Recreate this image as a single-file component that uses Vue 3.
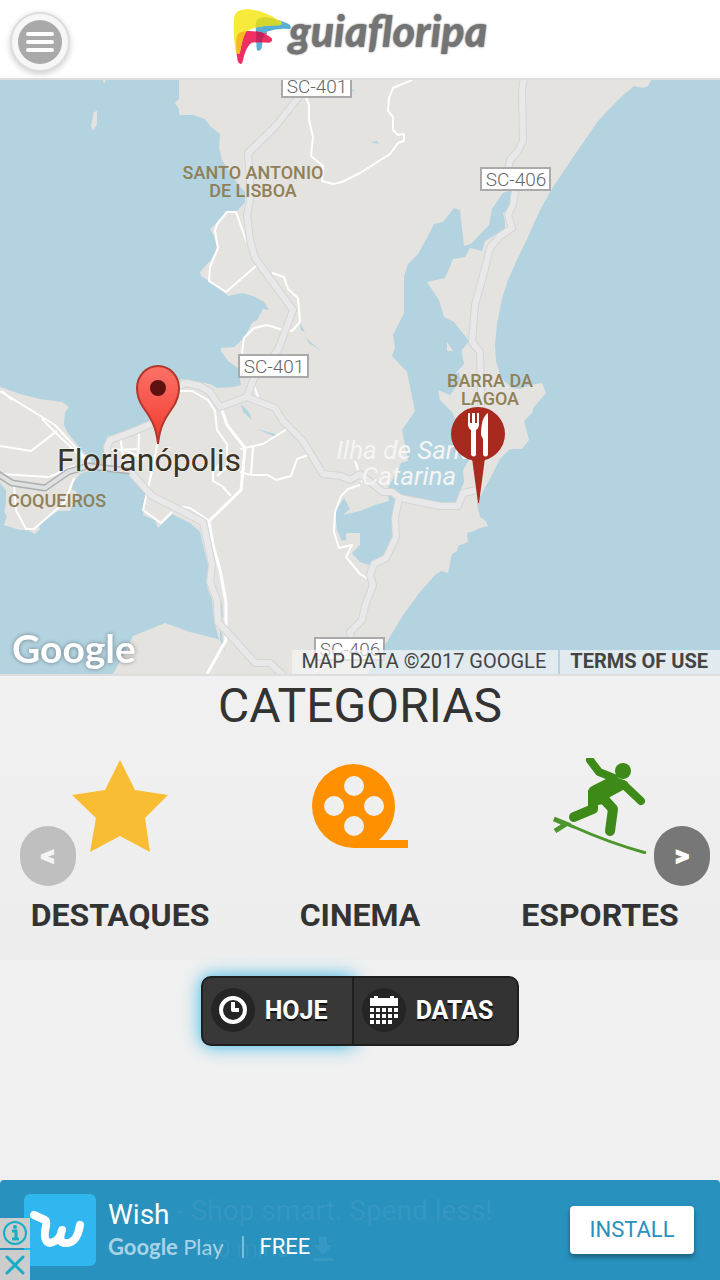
<script setup>
const highways = [
  'M300 92L298 98L275 127L248 153L250 180L250 200L247 215L250 240L255 258L293 310L278 350L254 378L247 397L220 407L210 392L200 386L186 383L170 390',
  'M151 424L132 432L110 440L107 447L108 466',
  'M247 397L275 408L283 421L303 441L323 474L341 476L350 480L360 474L383 492L392 492L400 498L440 506L458 506L463 493L477 490',
  'M399 498L395 518L396 537L386 558L374 564L370 575L373 585L365 606L362 620L350 632L352 644L335 660L310 674',
  'M524 78L522 90L523 141L518 151L510 160L508 170L515 190L513 205L508 215L512 228L500 236L490 248L483 276L475 305L472 342L480 352L481 390L481 410',
  'M128 469L152 496L180 510L203 522L208 545L212 565L210 582L217 600L218 622L240 646L255 663L270 663L286 678',
]
const streets = [
  'M306 98L309 105L309 120L313 137L311 156L323 166L322 181L333 184L342 182L360 173L390 154L398 143L404 141L404 134L398 135L393 130L393 117L388 111L389 98L393 88L412 80',
  'M247 243L236 212L227 212L217 224L215 231L218 248L210 267L209 281L226 292L256 266L256 258',
  'M272 273L284 277L288 289L298 298L300 322L292 331L283 330L267 325L254 328L244 338L242 352L245 362',
  'M253 383L258 397L250 399',
  'M0 391L55 425L89 462M42 419L61 438L84 459M57 431L31 451L0 446M12 400L2 391',
  'M180 391L192 391L208 400L215 411L217 430L227 444L227 467L217 476',
  'M120 436L125 468M139 434L138 460M107 450L140 449M125 450L145 460M158 440L154 462L143 510L161 523L172 512',
  'M240 449L263 444L287 429M253 447L251 475L268 475L276 480L291 476L297 459L308 455M240 472L251 475M221 463L213 472L213 481L222 486L231 496',
  'M0 474L49 477L75 466M14 484L16 510L26 529L34 529L65 502L74 478',
  'M172 510L182 507L190 508L208 520',
  'M360 485L348 489L341 496L335 512L334 532L339 548L352 545L346 557L360 574L370 580',
  'M355 461L362 482',
]
const mainStreets = [
  'M221 407L227 425L245 448L243 470L241 490L209 521L213 545L220 570L226 602L226 640L207 674',
]
</script>

<template>
  <div class="page">
    <header class="topbar">
      <button class="menu" type="button" aria-label="Menu">
        <svg width="44" height="44" viewBox="0 0 44 44" aria-hidden="true">
          <circle cx="22" cy="22" r="22" fill="#a9a9a9" />
          <path d="M10 14H34M10 22H34M10 30H34" stroke="#fff" stroke-width="4" stroke-linecap="round" />
        </svg>
      </button>
      <a class="logo" href="#" aria-label="guiafloripa">
        <svg width="60" height="60" viewBox="34 15 180 180" aria-hidden="true">
          <path fill="#58afd5" d="M102 70Q102 50 130 48Q160 52 200 68Q212 76 205 84Q170 80 135 92Q122 110 120 142Q112 156 105 145Q102 110 102 70Z" />
          <path fill="#ef2f63" d="M44 110Q50 90 75 90Q125 88 150 112Q155 122 143 125Q110 122 90 125Q72 135 62 185Q55 195 48 180Q42 150 44 110Z" />
          <path fill="#f7ea3a" d="M37 55Q37 25 75 25Q125 26 178 62Q184 73 170 73Q100 73 73 92Q62 110 54 158Q42 162 40 140Q34 90 37 55Z" />
          <path fill="#d3d62f" d="M102 70Q102 50 130 48Q155 50 178 62Q184 73 170 73Q130 73 102 80Z" />
          <path fill="#f5b921" d="M44 110Q50 90 74 91Q62 110 54 158Q46 160 44 148Z" />
          <path fill="#c4245a" d="M103 91Q120 92 135 101V92Q122 110 121 124L104 124Z" />
        </svg>
        <span>guiafloripa</span>
      </a>
    </header>

    <section class="map" aria-label="Mapa">
      <svg class="canvas" viewBox="0 80 720 594" role="img" aria-label="Mapa de Florianópolis">
        <defs>
          <linearGradient id="pin" x1="0" y1="0" x2="0" y2="1">
            <stop offset="0" stop-color="#fb7268" />
            <stop offset="1" stop-color="#f2382c" />
          </linearGradient>
        </defs>
        <rect y="80" width="720" height="594" fill="#e4e3df" />
        <g fill="#b3d3e0">
          <path d="M0 80H179V99L175 103L179 109V115H193L205 119L210 126L220 134L219 148L222 160L230 173L238 184L245 192V202L237 211H227L217 223L210 229L214 236L217 248L211 260L200 272L201 276L211 282L226 294L228 296L242 293L253 296L264 302L269 310L263 309L257 320L252 323L244 338L234 347L221 348V351L228 361L238 368L241 385L233 387L217 388L210 384L190 380L182 379L158 390L150 408L151 421L135 427L107 437L104 455L110 457L111 469L94 469L90 457L84 453L67 432L64 425L65 412L69 407L62 402L40 399L20 394L0 387Z" />
          <path d="M0 483L6 490V505L4 512L7 516L4 525L20 530L28 530L35 534L40 529L38 524L58 511H70L72 506L78 498L76 491L72 490L73 483L80 474L90 470H128L140 484L146 492L143 515L155 520L158 528L168 518L172 514L190 523L200 532L203 545L208 565L207 587L212 600L214 620L219 640L214 638L190 632L165 623L133 636L125 652L113 674H0Z" />
          <path d="M651 80L648 86L643 88L634 86L620 98L598 121L580 147L553 187L540 210L527 239L516 262L508 280L502 299L497 324L495 345L496 361L501 378L512 388L520 389L530 385L542 383L546 393L534 407L532 413L524 421L529 440L522 449H510L500 459L494 471L482 493L477 503L480 517L486 521L488 526L480 528L474 531L467 533L468 542L458 546L457 551L452 554L448 573L441 571L436 574L420 592L403 615L385 645L372 665L368 674H720V80Z" />
          <path d="M454 208L443 222L434 224L427 238L418 254L408 264L404 277V313L393 335L395 347L392 356L407 372L415 411L402 430L405 445L408 461L401 463L397 472L388 487L392 491L402 497L440 504H458L461 499L459 493L464 482L463 470L469 460L466 445L460 428L452 412L440 400L438 390L450 395L461 380L459 372L464 368V360L462 350L469 341L454 322L444 317L439 300L427 282L445 278L453 259L465 257L470 248L482 251L485 241L498 233L505 229V222L503 213L511 207V190L503 193L492 209L489 225L484 230L471 244L464 246L460 210Z" />
          <path d="M344 498L350 509L343 515L360 511L375 505L389 501L387 492L396 498L395 518L396 537L386 558L372 566L360 562L352 553L360 545V533H346V540L342 541L337 530L335 512Z" />
          <path d="M215 590L222 604L223 620L217 605ZM300 322L305 332L301 330ZM305 337L321 351L309 343ZM241 404L249 412L252 420L243 412ZM257 429L279 435L276 437ZM370 142L377 141L379 144ZM352 89L356 91L352 91ZM220 625L225 652L220 640Z" />
        </g>
        <path fill="#e4e3df" d="M103 80L104 84L106 80ZM94 112L97 111V124L93 131L91 126ZM447 342L453 351H447ZM461 349L468 369L455 374L464 364Z" />
        <g fill="none" stroke="#fff" stroke-width="2" stroke-linejoin="round">
          <path v-for="d in streets" :key="d" :d="d" />
        </g>
        <g fill="none" stroke-linejoin="round">
          <path v-for="d in mainStreets" :key="d" :d="d" stroke="#fff" stroke-width="3" />
          <path v-for="d in highways" :key="'c' + d" :d="d" stroke="#d4d5d6" stroke-width="8" />
          <path v-for="d in highways" :key="d" :d="d" stroke="#e8e8e8" stroke-width="6" />
          <path d="M-2 474L12 483L45 488L68 472L88 466L130 471" stroke="#aaaeb1" stroke-width="7" />
          <path d="M-2 474L12 483L45 488L68 472L88 466L130 471" stroke="#dfe0e0" stroke-width="4" />
        </g>
        <g class="shield">
          <rect x="282" y="74" width="69" height="23" /><text x="317" y="93">SC-401</text>
          <rect x="481" y="168" width="69" height="22" /><text x="516" y="186">SC-406</text>
          <rect x="239" y="355" width="69" height="22" /><text x="274" y="373">SC-401</text>
          <rect x="315" y="638" width="69" height="22" /><text x="350" y="656">SC-406</text>
        </g>
        <g class="area">
          <text x="253" y="179">SANTO ANTONIO</text><text x="253" y="197">DE LISBOA</text>
          <text x="490" y="387">BARRA DA</text><text x="490" y="405">LAGOA</text>
          <text x="57" y="507">COQUEIROS</text>
        </g>
        <g class="island"><text x="409" y="459">Ilha de Santa</text><text x="409" y="485">Catarina</text></g>
        <text class="city" x="149" y="471">Florianópolis</text>
        <path d="M158 444C156 425 150 417 143 407Q137 398 137 388A21 22 0 0 1 179 388Q179 398 173 407C166 417 160 425 158 444Z" fill="url(#pin)" stroke="#b3362d" stroke-width="2" />
        <circle cx="158" cy="388" r="8" fill="#5d1111" />
        <path d="M472 458H485L479 503H478Z" fill="#a82c20" />
        <circle cx="478" cy="434" r="27" fill="#a8291d" />
        <g fill="#fff">
          <path d="M468 413H470V423H472V413H475V423H477V413H479V424Q479 428 476 430V455Q474 458 471 455V430Q468 428 468 424Z" />
          <path d="M488 413V455Q486 458 483 455V439L481 435Q481 417 488 413Z" />
        </g>
        <text class="google" x="12" y="663">Google</text>
      </svg>
      <div class="credits">
        <span>MAP DATA ©2017 GOOGLE</span>
        <a href="#">TERMS OF USE</a>
      </div>
    </section>

    <section class="categories">
      <h1>CATEGORIAS</h1>
      <div class="grid">
        <a href="#" class="category">
          <svg width="96" height="96" viewBox="0 0 96 96" aria-hidden="true">
            <path fill="#f9bd33" d="M48 2L63 32L96 37L73 60L78 94L48 78L18 94L24 60L0 37L33 32Z" />
          </svg>
          DESTAQUES
        </a>
        <a href="#" class="category">
          <svg width="96" height="96" viewBox="0 0 96 96" aria-hidden="true">
            <path fill="#ff9100" fill-rule="evenodd" d="M42 6A42 42 0 0 1 83 48Q83 68 67 82H96V90H42A42 42 0 0 1 42 6ZM42 18A10 10 0 1 0 42 38A10 10 0 1 0 42 18ZM22 38A10 10 0 1 0 22 58A10 10 0 1 0 22 38ZM62 38A10 10 0 1 0 62 58A10 10 0 1 0 62 38ZM42 58A10 10 0 1 0 42 78A10 10 0 1 0 42 58Z" />
          </svg>
          CINEMA
        </a>
        <a href="#" class="category">
          <svg width="96" height="96" viewBox="0 0 96 96" aria-hidden="true">
            <circle cx="71" cy="13" r="8" fill="#3d8a18" />
            <path fill="#3d8a18" d="M46 16L61 18L69 21L76 24L71 32L58 39L52 46L46 47L36 45V33Q37 29 42 27L54 21Z" />
            <g fill="none" stroke="#3d8a18" stroke-linecap="round" stroke-linejoin="round">
              <path d="M38 2L47 14L62 20M71 26L89 43" stroke-width="8" />
              <path d="M41 35L41 51L22 59M50 39L61 51L58 73" stroke-width="10" />
            </g>
            <g fill="none" stroke="#4c962b">
              <path d="M2 61L22 69Q58 85 94 95" stroke-width="3" />
              <path d="M2 61L14 66L3 73" stroke-width="5" />
            </g>
          </svg>
          ESPORTES
        </a>
      </div>
      <button class="arrow prev" type="button" aria-label="Anterior">&lt;</button>
      <button class="arrow next" type="button" aria-label="Próximo">&gt;</button>
    </section>

    <div class="filters">
      <button class="filter active" type="button">
        <svg width="44" height="44" viewBox="0 0 44 44" aria-hidden="true">
          <circle cx="22" cy="22" r="22" fill="#252525" />
          <circle cx="22" cy="22" r="12" fill="none" stroke="#fff" stroke-width="4" />
          <path d="M22 14V22H28" fill="none" stroke="#fff" stroke-width="4" stroke-linejoin="round" />
        </svg>
        HOJE
      </button>
      <button class="filter" type="button">
        <svg width="44" height="44" viewBox="0 0 44 44" aria-hidden="true">
          <circle cx="22" cy="22" r="22" fill="#252525" />
          <path fill="#fff" d="M8 10H12V8H16V10H28V8H32V10H36V18H8ZM8 20h4v4h-4ZM14 20h4v4h-4ZM20 20h4v4h-4ZM26 20h4v4h-4ZM32 20h4v4h-4ZM8 26h4v4h-4ZM14 26h4v4h-4ZM20 26h4v4h-4ZM26 26h4v4h-4ZM32 26h4v4h-4ZM8 32h4v4h-4ZM14 32h4v4h-4ZM20 32h4v4h-4ZM26 32h4v4h-4Z" />
        </svg>
        DATAS
      </button>
    </div>

    <aside class="ad">
      <svg class="app-icon" width="72" height="72" viewBox="0 0 72 72" aria-hidden="true">
        <rect width="72" height="72" rx="6" fill="#31b7ef" />
        <path d="M10 21L21 26Q23 27 22 32C18 49 25 50 29 48Q36 46 38 36Q34 48 40 49C50 50 54 43 56 31" fill="none" stroke="#fff" stroke-width="8" stroke-linecap="round" stroke-linejoin="round" />
      </svg>
      <div class="ad-controls">
        <button type="button" aria-label="Info">
          <svg width="26" height="26" viewBox="0 0 26 26" aria-hidden="true">
            <g fill="none" stroke="#18adc7" stroke-width="2"><circle cx="13" cy="13" r="11" /><path d="M10 11H14V19M10 19H17" stroke-width="3" /></g>
            <circle cx="13" cy="7" r="2" fill="#18adc7" />
          </svg>
        </button>
        <button type="button" aria-label="Fechar">
          <svg width="26" height="26" viewBox="0 0 26 26" aria-hidden="true"><path d="M5 5L21 21M21 5L5 21" stroke="#18adc7" stroke-width="3" stroke-linecap="round" /></svg>
        </button>
      </div>
      <div class="ghost" aria-hidden="true">
        <p>- Shop smart. Spend less!</p>
        <p class="ghost-row">100 mins
          <svg width="20" height="24" viewBox="0 0 20 24"><path fill="currentColor" d="M6 0H14V8H20L10 18L0 8H6ZM0 21H20V24H0Z" /></svg>
        </p>
      </div>
      <div class="ad-text">
        <strong>Wish</strong>
        <div class="ad-meta"><span class="store">Google <span class="play">Play</span></span><span class="price">FREE</span></div>
      </div>
      <button class="install" type="button">INSTALL</button>
    </aside>
  </div>
</template>

<style>
body {
  background: #f0f0f0;
}
</style>

<style scoped>
* {
  box-sizing: border-box;
}
.page {
  display: flex;
  flex-direction: column;
  min-height: 100vh;
  font-family: Roboto, "Liberation Sans", sans-serif;
  color: #333;
  background: #f0f0f0;
}
button {
  font-family: inherit;
  border: 0;
  padding: 0;
  cursor: pointer;
}
a {
  color: inherit;
  text-decoration: none;
}
svg {
  display: block;
  flex: none;
}
.topbar {
  display: grid;
  grid-template-columns: 1fr auto 1fr;
  height: 80px;
  padding: 6px 10px 0;
  background: #fff;
  border-bottom: 2px solid #ddd;
}
.menu {
  display: grid;
  place-items: center;
  width: 60px;
  height: 60px;
  margin-top: 6px;
  border: 2px solid #ddd;
  border-radius: 50%;
  background: #f6f6f6;
  box-shadow: 0 2px 6px rgba(0, 0, 0, 0.2);
}
.logo {
  display: flex;
  height: 60px;
  color: #747474;
  font: italic 900 43px/50px Lato, "Open Sans", sans-serif;
  text-shadow: 0 0 2px #747474;
}
.logo span {
  margin-left: -4px;
}
.map {
  position: relative;
  border-bottom: 2px solid #ddd;
}
.canvas {
  width: 100%;
  height: auto;
}
.canvas text {
  text-anchor: middle;
}
.shield rect {
  fill: #fff;
  stroke: #aaa;
  stroke-width: 2px;
}
.shield text {
  font-size: 19px;
  font-weight: 300;
  fill: #666;
}
.area text {
  font-size: 18px;
  font-weight: 500;
  fill: #8f8057;
}
.island text {
  font-size: 26px;
  font-style: italic;
  fill: #f5f5f4;
}
.canvas .city {
  font-size: 32px;
  fill: #3b3324;
  stroke: rgba(255, 255, 255, 0.4);
  stroke-width: 2px;
  paint-order: stroke;
}
.canvas .google {
  font: 700 39px Lato, sans-serif;
  fill: #fff;
  text-anchor: start;
  filter: drop-shadow(0 0 2px rgba(0, 0, 0, 0.4));
}
.credits {
  position: absolute;
  right: 0;
  bottom: 0;
  display: flex;
  gap: 2px;
  font-size: 20px;
  line-height: 22px;
  color: #444;
  white-space: nowrap;
}
.credits > * {
  padding: 0 12px 2px 10px;
  background: rgba(245, 245, 245, 0.7);
}
.credits a {
  font-weight: 700;
}
.categories {
  position: relative;
  padding-bottom: 25px;
  background: linear-gradient(#f1f1f1, #ededed);
}
h1 {
  margin: 0 0 22px;
  font-size: 48px;
  font-weight: 400;
  line-height: 60px;
  text-align: center;
}
.grid {
  display: grid;
  grid-template-columns: repeat(3, 1fr);
}
.category {
  display: flex;
  flex-direction: column;
  align-items: center;
  gap: 41px;
  font-size: 32px;
  font-weight: 700;
  line-height: 40px;
}
.arrow {
  position: absolute;
  top: 150px;
  width: 56px;
  height: 60px;
  border-radius: 28px;
  background: #777;
  color: #fff;
  font-size: 28px;
  font-weight: 900;
  line-height: 60px;
  -webkit-text-stroke: 1px currentColor;
}
.prev {
  left: 20px;
  background: #bfbfbf;
  color: #f4f4f4;
}
.next {
  right: 10px;
}
.filters {
  display: flex;
  justify-content: center;
  padding: 16px 0 40px;
}
.filter {
  position: relative;
  display: flex;
  align-items: center;
  gap: 10px;
  height: 70px;
  padding: 0 24px 2px 8px;
  border: 2px solid #1f1f1f;
  border-radius: 0 10px 10px 0;
  background: #333;
  color: #fff;
  font-size: 25px;
  font-weight: 700;
  text-shadow: 0 2px 0 #111;
}
.filter + .filter {
  border-left: 0;
}
.active {
  border-radius: 10px 0 0 10px;
  background: #383838;
  box-shadow: 0 0 18px #33b5e5;
}
.ad {
  position: relative;
  display: flex;
  align-items: flex-start;
  gap: 12px;
  height: 100px;
  margin-top: auto;
  padding: 14px 26px 0 24px;
  border-radius: 4px 4px 0 0;
  background: #2891bd;
  color: #fff;
}
.ad-controls {
  position: absolute;
  left: 0;
  bottom: 0;
  display: grid;
  gap: 2px;
}
.ad-controls button {
  display: grid;
  place-items: center;
  width: 30px;
  height: 30px;
  background: #ccc;
}
.ghost {
  position: absolute;
  left: 176px;
  top: 12px;
  color: rgba(255, 255, 255, 0.07);
  font-size: 28px;
  line-height: 38px;
}
.ghost p {
  margin: 0;
}
.ghost-row {
  display: flex;
  align-items: center;
  gap: 24px;
  padding-left: 14px;
  font-size: 24px;
}
.ad-text {
  position: relative;
  flex: 1;
}
.ad-text strong {
  display: block;
  font-size: 28px;
  font-weight: 400;
  line-height: 42px;
}
.ad-meta {
  display: flex;
  align-items: center;
  font-size: 22px;
  line-height: 22px;
}
.store {
  font-family: Lato, sans-serif;
  font-weight: 700;
  color: #a9d3e5;
}
.play {
  font-weight: 400;
}
.price {
  margin-left: 18px;
  padding-left: 16px;
  border-left: 2px solid #7ebdd7;
}
.install {
  width: 124px;
  height: 48px;
  margin-top: 12px;
  border-radius: 4px;
  background: #fff;
  color: #2891bd;
  font-size: 22px;
  line-height: 44px;
  box-shadow: 0 3px 5px rgba(0, 0, 0, 0.35);
}
</style>
